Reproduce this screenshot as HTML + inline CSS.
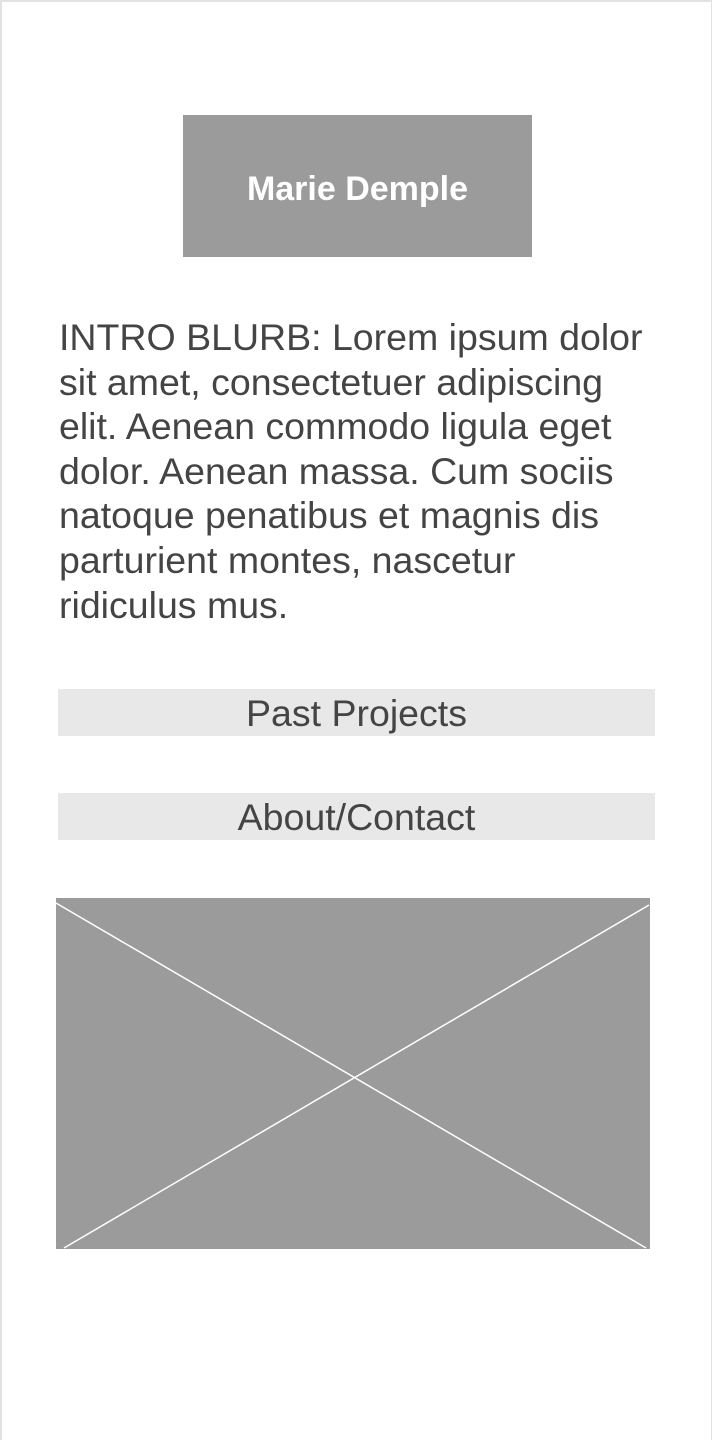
<!DOCTYPE html>
<html><head><meta charset="utf-8"><style>
html,body{margin:0;padding:0;background:#fff;}
body{width:714px;height:1440px;position:relative;overflow:hidden;font-family:"Liberation Sans",Arial,sans-serif;}
.frame{position:absolute;left:0;top:0;width:712px;height:1440px;border-left:2px solid #e2e2e2;border-top:2px solid #e2e2e2;border-right:1px solid #e2e2e2;box-sizing:border-box;}
.hdr{position:absolute;left:183px;top:115px;width:349px;height:142px;background:#9b9b9b;color:#fff;font-weight:bold;font-size:34px;text-align:center;line-height:148px;}
.blurb{position:absolute;left:59px;top:315px;font-size:37.5px;line-height:44.6px;color:#444;white-space:nowrap;}
.btn{position:absolute;left:58px;width:597px;height:47px;background:#e8e8e8;color:#444;font-size:37.5px;text-align:center;line-height:49px;}
</style></head><body>
<div class="frame"></div>
<div class="hdr">Marie Demple</div>
<div class="blurb">INTRO BLURB: Lorem ipsum dolor<br>sit amet, consectetuer adipiscing<br>elit. Aenean commodo ligula eget<br>dolor. Aenean massa. Cum sociis<br>natoque penatibus et magnis dis<br>parturient montes, nascetur<br>ridiculus mus.</div>
<div class="btn" style="top:689px">Past Projects</div>
<div class="btn" style="top:793px">About/Contact</div>
<svg style="position:absolute;left:56px;top:898px" width="594" height="351">
<rect x="0" y="0" width="594" height="351" fill="#9b9b9b"/>
<line x1="0" y1="5" x2="590" y2="350" stroke="#fff" stroke-width="1.5"/>
<line x1="593" y1="7" x2="8" y2="350" stroke="#fff" stroke-width="1.5"/>
</svg>
</body></html>
